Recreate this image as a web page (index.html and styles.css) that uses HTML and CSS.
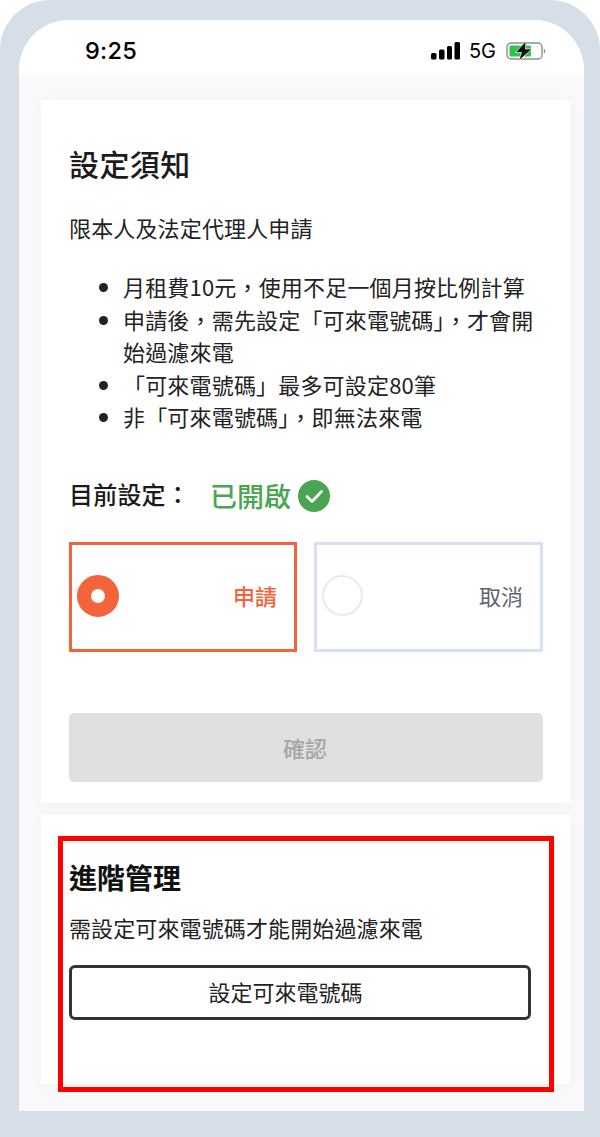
FILE: index.html
```html
<!DOCTYPE html>
<html lang="zh-Hant">
<head>
<meta charset="utf-8">
<title>設定須知</title>
<link rel="stylesheet" href="styles.css">
</head>
<body>
<div class="frame">
<div class="phone">
  <header class="status">
    <span class="time">9:25</span>
    <div class="status-right">
      <svg class="signal" width="30" height="18" viewBox="0 0 30 18"><rect x="0" y="11" width="5.5" height="6.500" rx="1.5"/><rect x="8" y="7.500" width="5.5" height="10" rx="1.5"/><rect x="16" y="4" width="5" height="13.500" rx="1.5"/><rect x="23.500" y="0" width="5.5" height="17.500" rx="1.5"/></svg>
      <span class="net">5G</span>
      <svg class="battery" width="40" height="20" viewBox="0 0 40 20"><rect x="1" y="2" width="35" height="16" rx="4" fill="none" stroke="#8f8f8f" stroke-width="1.4"/><rect x="3.500" y="4.500" width="21.500" height="11" rx="1.5" fill="#2fc24f"/><path d="M37.800 7.500c1 .5 1.500 1.400 1.500 2.500s-.5 2-1.500 2.500z" fill="#8f8f8f"/><path d="M20 0 9.500 11.500h6L12.500 20 26 8h-6.500z" fill="#111" stroke="#fff" stroke-width=".7"/></svg>
    </div>
  </header>
  <main class="content">
    <section class="card card-main">
      <h1 class="title">設定須知</h1>
      <p class="intro">限本人及法定代理人申請</p>
      <ul class="rules">
        <li>月租費10元，使用不足一個月按比例計算</li>
        <li>申請後，需先設定「可來電號碼」，才會開始過濾來電</li>
        <li>「可來電號碼」最多可設定80筆</li>
        <li>非「可來電號碼」，即無法來電</li>
      </ul>
      <div class="current">
        <span class="current-label">目前設定：</span>
        <span class="current-value">已開啟</span>
        <svg class="check" width="32" height="32" viewBox="0 0 32 32"><circle cx="16" cy="16" r="16" fill="#4aa552"/><path d="M9 16.500l5 5 9.500-10" fill="none" stroke="#fff" stroke-width="2.600" stroke-linecap="round" stroke-linejoin="round"/></svg>
      </div>
      <div class="options">
        <div class="option option-on"><span class="radio radio-on"></span><span>申請</span></div>
        <div class="option option-off"><span class="radio"></span><span>取消</span></div>
      </div>
      <button class="confirm" type="button">確認</button>
    </section>
    <section class="card card-adv">
      <h2 class="adv-title">進階管理</h2>
      <p class="adv-text">需設定可來電號碼才能開始過濾來電</p>
      <button class="adv-btn" type="button">設定可來電號碼</button>
    </section>
  </main>
</div>
</div>
<div class="highlight"></div>
</body>
</html>
```

FILE: styles.css
```css
* { box-sizing: border-box; }
html, body { margin: 0; padding: 0; }
body {
  position: relative;
  width: 600px;
  height: 1137px;
  overflow: hidden;
  background: #fff;
  font-family: "Noto Sans CJK TC", "Noto Sans", sans-serif;
  color: #222;
}
.frame {
  height: 1137px;
  padding: 20px 16px 26px 19px;
  background: #d6dee8;
  border-radius: 50px 50px 0 0;
}
.phone {
  display: flex;
  flex-direction: column;
  height: 1091px;
  background: #f9f9f9;
  border-radius: 50px 50px 0 0;
  overflow: hidden;
}
.status {
  display: flex;
  flex: none;
  justify-content: space-between;
  align-items: center;
  height: 57px;
  padding: 4px 38px 0 66px;
  background: #fff;
  color: #000;
}
.time {
  font-family: Inter, Roboto, sans-serif;
  font-size: 23.500px;
  font-weight: 500;
  letter-spacing: 0.300px;
}
.status-right { display: flex; align-items: center; }
.signal { fill: #000; }
.net {
  margin: 0 10px 0 8px;
  font-family: Inter, Roboto, sans-serif;
  font-size: 20px;
  line-height: 18px;
}
.content {
  display: flex;
  flex-direction: column;
  gap: 12px;
  padding: 23px 14px 0 22px;
}
.card {
  background: #fff;
  box-shadow: 0 2px 14px rgba(0, 0, 0, 0.035);
}
.card-main { height: 703px; padding: 39px 27px 0 28px; }
.title {
  margin: 0;
  font-size: 30px;
  font-weight: 500;
  line-height: 48px;
  letter-spacing: 0.400px;
  color: #1c1c1c;
}
.intro {
  margin: 24px 0 0;
  font-size: 22px;
  line-height: 32px;
  letter-spacing: 0.150px;
}
.rules {
  margin: 27px 0 0;
  padding: 0 0 0 54px;
  font-size: 22px;
  line-height: 32.500px;
  letter-spacing: 0.180px;
}
.current {
  display: flex;
  align-items: center;
  margin-top: 40px;
  height: 46px;
}
.current-label {
  margin-top: -4px;
  font-size: 24px;
  font-weight: 500;
  letter-spacing: 0.200px;
  color: #1a1a1a;
}
.current-value {
  margin-left: 20px;
  font-size: 27px;
  font-weight: 500;
  color: #4aa552;
}
.check { margin-left: 7px; }
.options {
  display: flex;
  gap: 17px;
  margin-top: 23px;
}
.option {
  display: flex;
  justify-content: space-between;
  align-items: center;
  height: 110px;
  padding: 0 17px 0 5px;
  border: 3px solid #d6e0f6;
  font-size: 22px;
  color: #5f6570;
}
.option span:last-child { margin-top: -4px; }
.option-on { flex: 0 0 228px; border-color: #f4643a; color: #f4643a; font-weight: 500; }
.option-off { flex: 0 0 229px; }
.radio {
  width: 41px;
  height: 41px;
  margin-top: -2px;
  border: 2px solid #e7eaf0;
  border-radius: 50%;
}
.radio-on {
  width: 42px;
  height: 42px;
  border: 14px solid #f4643a;
  background: #fff;
}
.confirm {
  display: block;
  width: 474px;
  height: 69px;
  margin-top: 61px;
  padding: 0 2px 0 0;
  border: 0;
  border-radius: 5px;
  background: #e0e0e0;
  color: #a6a6a6;
  font-family: inherit;
  font-size: 22px;
  font-weight: 500;
}
.card-adv { height: 269px; padding: 40px 39px 0 28px; }
.adv-title {
  margin: 0;
  font-size: 28px;
  font-weight: 700;
  line-height: 44px;
  color: #111;
}
.adv-text {
  margin: 12px 0 0;
  font-size: 22px;
  line-height: 32px;
  letter-spacing: 0.120px;
}
.adv-btn {
  display: block;
  width: 462px;
  height: 55px;
  margin: 22px 0 0;
  padding: 0 29px 4px 0;
  border: 3px solid #333;
  border-radius: 6px;
  background: #fff;
  color: #222;
  font-family: inherit;
  font-size: 22px;
}
.highlight {
  position: absolute;
  left: 58px;
  top: 836px;
  width: 496px;
  height: 256px;
  border: 5px solid #ff0000;
}
```
